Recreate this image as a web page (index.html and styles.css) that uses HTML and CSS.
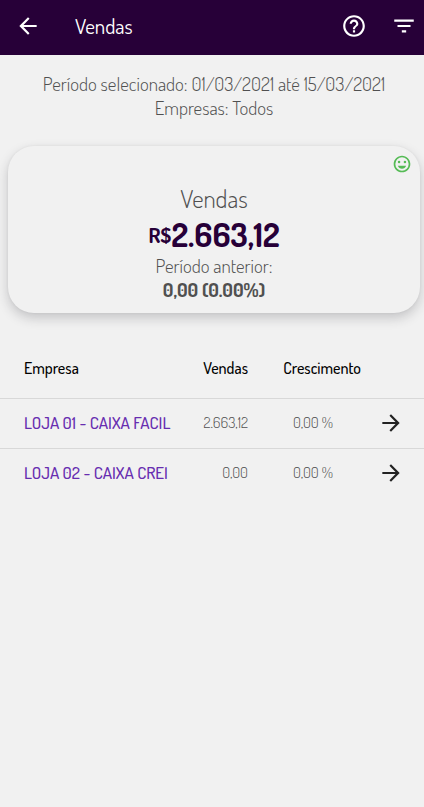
FILE: index.html
```html
<!DOCTYPE html>
<html lang="pt-BR">
<head>
<meta charset="utf-8">
<meta name="viewport" content="width=device-width, initial-scale=1">
<title>Vendas</title>
<link rel="stylesheet" href="styles.css">
</head>
<body>
<header class="topbar">
  <button class="icon-button" type="button" aria-label="Voltar">
    <svg class="icon" viewBox="0 0 24 24"><path d="M20 11H7.83l5.59-5.59L12 4l-8 8 8 8 1.41-1.41L7.83 13H20v-2z"/></svg>
  </button>
  <h1 class="title">Vendas</h1>
  <button class="icon-button" type="button" aria-label="Ajuda">
    <svg class="icon" viewBox="0 0 24 24"><path d="M11 18h2v-2h-2v2zm1-16C6.48 2 2 6.48 2 12s4.480 10 10 10 10-4.480 10-10S17.520 2 12 2zm0 18c-4.410 0-8-3.590-8-8s3.590-8 8-8 8 3.590 8 8-3.590 8-8 8zm0-14c-2.210 0-4 1.790-4 4h2c0-1.100.9-2 2-2s2 .9 2 2c0 2-3 1.750-3 5h2c0-2.250 3-2.500 3-5 0-2.210-1.790-4-4-4z"/></svg>
  </button>
  <button class="icon-button" type="button" aria-label="Filtrar">
    <svg class="icon" viewBox="0 0 24 24"><path d="M10 18h4v-2h-4v2zM3 6v2h18V6H3zm3 7h12v-2H6v2z"/></svg>
  </button>
</header>
<main>
  <section class="period">
    <p>Período selecionado: 01/03/2021 até 15/03/2021</p>
    <p>Empresas: Todos</p>
  </section>
  <section class="card">
    <svg class="mood" viewBox="0 0 24 24" aria-hidden="true"><path d="M12 2C6.470 2 2 6.500 2 12s4.470 10 10 10 10-4.500 10-10S17.530 2 12 2zm0 18a8 8 0 1 1 0-16 8 8 0 0 1 0 16z"/><circle cx="8.500" cy="9.500" r="1.500"/><circle cx="15.500" cy="9.500" r="1.500"/><path d="M7 14h10c-.8 2.300-2.700 3.700-5 3.700S7.800 16.300 7 14z"/></svg>
    <h2 class="card-title">Vendas</h2>
    <p class="amount"><span class="currency">R$</span>2.663,12</p>
    <p class="previous">Período anterior:</p>
    <p class="previous strong">0,00 (0.00%)</p>
  </section>
  <table class="sales">
    <thead>
      <tr><th class="company">Empresa</th><th class="value">Vendas</th><th class="growth">Crescimento</th><th class="go"></th></tr>
    </thead>
    <tbody>
      <tr>
        <td class="company"><div class="name">LOJA 01 - CAIXA FACIL</div></td>
        <td class="value">2.663,12</td>
        <td class="growth">0,00 %</td>
        <td class="go"><button class="icon-button" type="button" aria-label="Abrir loja 01"><svg class="icon" viewBox="0 0 24 24"><path d="M12 4l-1.410 1.410L16.170 11H4v2h12.170l-5.580 5.590L12 20l8-8z"/></svg></button></td>
      </tr>
      <tr>
        <td class="company"><div class="name">LOJA 02 - CAIXA CREI</div></td>
        <td class="value">0,00</td>
        <td class="growth">0,00 %</td>
        <td class="go"><button class="icon-button" type="button" aria-label="Abrir loja 02"><svg class="icon" viewBox="0 0 24 24"><path d="M12 4l-1.410 1.410L16.170 11H4v2h12.170l-5.580 5.590L12 20l8-8z"/></svg></button></td>
      </tr>
    </tbody>
  </table>
</main>
</body>
</html>
```
FILE: styles.css
```css
* {
  box-sizing: border-box;
}

body {
  margin: 0;
  min-height: 100vh;
  background: #f1f1f1;
  color: #505050;
  font-family: Dosis, Lato, sans-serif;
  font-size: 19px;
}

h1, h2, p {
  margin: 0;
  font-weight: 400;
}

.icon-button {
  display: inline-flex;
  padding: 0;
  border: 0;
  background: none;
  color: inherit;
}

.icon {
  display: block;
  width: 26px;
  height: 26px;
  fill: currentColor;
}

.topbar {
  display: flex;
  align-items: center;
  height: 55px;
  padding: 0 7px 4px 15px;
  gap: 24px;
  background: #270038;
  color: #fff;
}

.title {
  flex: 1;
  padding-left: 10px;
  font-size: 21px;
  line-height: 24px;
}

.period {
  padding: 17px 8px 0 12px;
  text-align: center;
  line-height: 24px;
}

.card {
  position: relative;
  margin: 26px 4px 0 8px;
  padding: 36px 16px 11px;
  border-radius: 26px;
  background: #f1f1f1;
  box-shadow: 0 5px 12px rgba(40, 40, 50, 0.22), 0 0 3px rgba(0, 0, 0, 0.06);
  text-align: center;
}

.mood {
  position: absolute;
  top: 8px;
  right: 8px;
  width: 20px;
  height: 20px;
  fill: #55bb55;
}

.card-title {
  font-size: 25px;
  line-height: 32px;
}

.period p,
.card-title,
.previous {
  font-weight: 300;
}

.amount {
  color: #270038;
  font-size: 33px;
  font-weight: 700;
  line-height: 40px;
}

.currency {
  font-size: 21px;
  vertical-align: 4px;
  line-height: 20px;
}

.previous {
  line-height: 24px;
}

.previous.strong {
  font-weight: 700;
}

.sales {
  width: 100%;
  margin-top: 26px;
  border-collapse: collapse;
  table-layout: fixed;
}

.sales th,
.sales td {
  height: 50px;
  padding: 0 0 2px;
  text-align: right;
  font-size: 15px;
  font-weight: 300;
}

.sales th {
  height: 59px;
  padding: 0;
  color: #000;
  font-size: 16px;
  font-weight: 500;
}

.sales tbody tr {
  border-top: 1px solid #d8d8d8;
}

.sales .company {
  width: 168px;
  padding-left: 24px;
  text-align: left;
}

.name {
  color: #672db0;
  font-size: 17px;
  font-weight: 500;
  white-space: nowrap;
}

.sales .value {
  width: 80px;
}

.sales th.growth {
  width: 113px;
}

.sales td.growth {
  padding-right: 28px;
}

.sales .go {
  padding: 0 20px 0 0;
  color: #222;
}

.go .icon-button {
  vertical-align: middle;
}
```
